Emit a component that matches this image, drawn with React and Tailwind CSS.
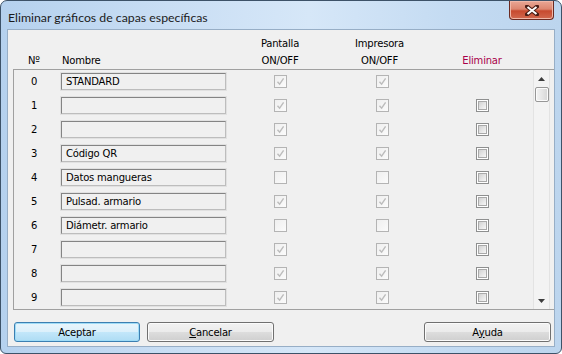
import React from "react";

const rows = [
  { n: 0, name: "STANDARD", screen: true, print: true, del: false },
  { n: 1, name: "", screen: true, print: true, del: true },
  { n: 2, name: "", screen: true, print: true, del: true },
  { n: 3, name: "Código QR", screen: true, print: true, del: true },
  { n: 4, name: "Datos mangueras", screen: false, print: false, del: true },
  { n: 5, name: "Pulsad. armario", screen: true, print: true, del: true },
  { n: 6, name: "Diámetr. armario", screen: false, print: false, del: true },
  { n: 7, name: "", screen: true, print: true, del: true },
  { n: 8, name: "", screen: true, print: true, del: true },
  { n: 9, name: "", screen: true, print: true, del: true },
];

// greyed out checkbox, like the disabled win7 ones
const DisabledCheck = ({ checked }) => (
  <div className="w-[13px] h-[13px] border border-[#b4b4b4] bg-[linear-gradient(135deg,#efefef,#fbfbfb)] flex items-center justify-center">
    {checked && (
      <svg width="9" height="9" viewBox="0 0 9 9">
        <path d="M1.5 4.8 L3.6 7.2 L7.6 1.4" fill="none" stroke="#bcbcbc" strokeWidth="1.4" />
      </svg>
    )}
  </div>
);

const DeleteCheck = () => (
  <div className="w-[13px] h-[13px] border border-[#8e8f8f] bg-white p-[1px]">
    <div className="w-full h-full border border-[#a9a9a9] bg-[linear-gradient(135deg,#d2d2d2,#f7f7f7)]" />
  </div>
);

const NameField = ({ value }) => (
  <div className="w-[167px] h-[19px] border border-[#e1e1e1] flex">
    <div className="flex-1 border border-[#848484] border-r-[#bdbdbd] border-b-[#bdbdbd] bg-[#f0f0f0] pl-[4px] leading-[15px] text-black whitespace-nowrap">
      {value}
    </div>
  </div>
);

const Button = ({ children, primary }) => (
  <button
    className={`h-[20px] rounded-[3px] text-black flex items-center justify-center ${
      primary
        ? "w-[126px] border border-[#3c7fb1] shadow-[inset_0_0_0_1px_#9fdcf7] bg-[linear-gradient(#e9f5fc_0%,#dbf0fb_50%,#c3e7fa_50%,#aedcf4_100%)]"
        : "w-[127px] border border-[#707070] shadow-[inset_0_0_0_1px_#fbfbfb] bg-[linear-gradient(#f2f2f2_0%,#ebebeb_50%,#dddddd_50%,#cfcfcf_100%)]"
    }`}
  >
    {children}
  </button>
);

const App = () => {
  return (
    <div className="w-[562px] h-[354px] overflow-hidden rounded-t-[7px] rounded-b-[6px] border border-[#3d5268] bg-[linear-gradient(90deg,#b5d1ee_0%,#c9def4_30%,#d6e7f8_55%,#c4dbf2_80%,#bcd5ee_100%)] flex flex-col">
      {/* title bar */}
      <div className="h-[28px] flex justify-between items-start pl-[7px]">
        <span className="mt-[9px] text-[12.3px] leading-[16px] text-[#1b1b1b] font-['Lato',sans-serif]">
          Eliminar gráficos de capas específicas
        </span>
        <div className="mr-[7px] w-[45px] h-[19px] rounded-b-[4px] border border-t-0 border-[#6b2a21] bg-[linear-gradient(#e9a795_0%,#dc8670_45%,#c74a2f_55%,#d2694f_100%)] shadow-[inset_0_0_0_1px_#efb7a8] flex items-center justify-center">
          <svg width="14" height="11" viewBox="0 0 14 11">
            <path d="M2 1.5 L12 9.5 M12 1.5 L2 9.5" stroke="#4a1d15" strokeWidth="4" strokeLinecap="square" />
            <path d="M2.5 2 L11.5 9 M11.5 2 L2.5 9" stroke="#ffffff" strokeWidth="2" />
          </svg>
        </div>
      </div>

      {/* client area */}
      <div className="flex-1 mx-[6px] mb-[6px] border border-[#97aec6] bg-[#f0f0f0] flex flex-col text-[10px] tracking-[-0.2px] text-black font-['DejaVu_Sans',Verdana,sans-serif]">
        {/* column headers */}
        <div className="h-[39px] pl-[6px] pt-[6px] flex leading-[16px]">
          <div className="w-[40px] flex flex-col justify-end text-center">Nº</div>
          <div className="w-[167px] ml-[6px] pl-[2px] flex flex-col justify-end">Nombre</div>
          <div className="w-[106px] text-center flex flex-col justify-between">
            <span>Pantalla</span>
            <span>ON/OFF</span>
          </div>
          <div className="w-[98px] pr-[5px] text-center flex flex-col justify-between">
            <span>Impresora</span>
            <span>ON/OFF</span>
          </div>
          <div className="w-[102px] text-center flex flex-col justify-end text-[#a8004a]">Eliminar</div>
        </div>

        {/* list */}
        <div className="h-[241px] ml-[5px] border-l border-t border-b border-[#a0a0a0] flex overflow-hidden">
          <div className="flex flex-col">
            {rows.map((row) => (
              <div key={row.n} className="h-[24px] shrink-0 pt-[2px] pb-[3px] flex items-center">
                <div className="w-[40px] text-center">{row.n}</div>
                <div className="ml-[6px]">
                  <NameField value={row.name} />
                </div>
                <div className="w-[106px] flex justify-center">
                  <DisabledCheck checked={row.screen} />
                </div>
                <div className="w-[98px] flex justify-center">
                  <DisabledCheck checked={row.print} />
                </div>
                <div className="w-[102px] flex justify-center">{row.del && <DeleteCheck />}</div>
              </div>
            ))}
          </div>

          {/* scrollbar */}
          <div className="w-[17px] border-l border-r border-[#e3e3e3] bg-[#f3f3f3] flex flex-col items-center">
            <div className="h-[17px] flex items-center justify-center">
              <svg width="7" height="4" viewBox="0 0 7 4">
                <path d="M0 4 L3.5 0 L7 4 Z" fill="#3c3c3c" />
              </svg>
            </div>
            <div className="w-[14px] h-[15px] rounded-[2px] border border-[#979797] bg-[linear-gradient(90deg,#f3f3f3,#e6e6e6_50%,#d6d6d6)] shadow-[inset_0_0_0_1px_#fbfbfb]" />
            <div className="flex-1" />
            <div className="h-[17px] flex items-center justify-center">
              <svg width="7" height="4" viewBox="0 0 7 4">
                <path d="M0 0 L7 0 L3.5 4 Z" fill="#3c3c3c" />
              </svg>
            </div>
          </div>
          <div className="flex-1" />
        </div>

        {/* buttons */}
        <div className="mt-[12px] pl-[6px] pr-[3px] flex">
          <Button primary>Aceptar</Button>
          <div className="ml-[7px]">
            <Button>
              <span className="underline">C</span>ancelar
            </Button>
          </div>
          <div className="flex-1" />
          <Button>
            A<span className="underline">y</span>uda
          </Button>
        </div>
      </div>
    </div>
  );
};

export default App;
